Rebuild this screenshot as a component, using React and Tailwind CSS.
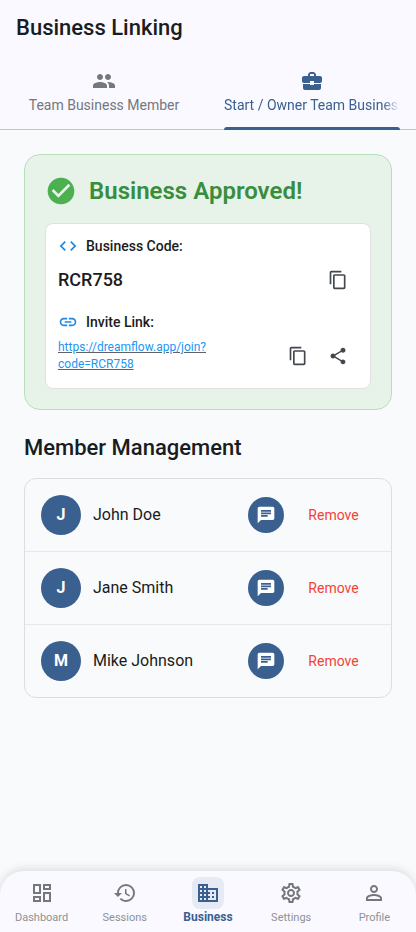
import {
  MdPeople, MdBusinessCenter, MdCheckCircle, MdCode, MdLink, MdContentCopy, MdShare,
  MdChat, MdOutlineDashboard, MdHistory, MdBusiness, MdOutlineSettings, MdPersonOutline,
} from "react-icons/md";

const members = ["John Doe", "Jane Smith", "Mike Johnson"];

const navItems = [
  { label: "Dashboard", Icon: MdOutlineDashboard },
  { label: "Sessions", Icon: MdHistory },
  { label: "Business", Icon: MdBusiness, active: true },
  { label: "Settings", Icon: MdOutlineSettings },
  { label: "Profile", Icon: MdPersonOutline },
];

function IconButton({ label, children }) {
  return (
    <button type="button" aria-label={label} className="flex size-10 shrink-0 items-center justify-center text-[#43474e]">
      {children}
    </button>
  );
}

function Tabs() {
  return (
    <div role="tablist" className="grid h-[74px] grid-cols-2 border-b border-[#c3c6cf]">
      <button type="button" role="tab" aria-selected="false" className="flex min-w-0 flex-col items-center px-4 pt-[13px] text-[#74777c]">
        <MdPeople size={24} />
        <span className="text-sm leading-6 whitespace-nowrap">Team Business Member</span>
      </button>
      <div className="-mb-px flex min-w-0 px-4">
        <button type="button" role="tab" aria-selected="true" className="flex w-full min-w-0 flex-col items-center pt-[13px] text-[#3a608f]">
          <MdBusinessCenter size={24} />
          <span className="w-full overflow-hidden text-left text-sm leading-6 whitespace-nowrap [mask-image:linear-gradient(to_right,black_90%,transparent)]">
            Start / Owner Team Business
          </span>
          <span className="mt-auto h-[3px] w-full rounded-t-[3px] bg-[#3a608f]" />
        </button>
      </div>
    </div>
  );
}

function ApprovedCard() {
  return (
    <section className="rounded-2xl border border-[#b7dfb9] bg-[#e7f2e8] p-5">
      <div className="flex items-center gap-3">
        <MdCheckCircle size={32} className="text-[#4caf50]" />
        <h2 className="text-2xl leading-8 font-semibold text-[#388e3c]">Business Approved!</h2>
      </div>
      <div className="mt-4 rounded-lg border border-[#e0e0e0] bg-white p-3">
        <div className="flex items-center gap-2">
          <MdCode size={20} className="text-[#1e88e5]" />
          <h3 className="text-sm leading-5 font-medium">Business Code:</h3>
        </div>
        <div className="mt-1 flex items-center">
          <p className="flex-1 text-lg font-medium">RCR758</p>
          <IconButton label="Copy business code"><MdContentCopy size={20} /></IconButton>
        </div>
        <div className="mt-3 flex items-center gap-2">
          <MdLink size={20} className="text-[#1e88e5]" />
          <h3 className="text-sm leading-5 font-medium">Invite Link:</h3>
        </div>
        <div className="mt-1 flex items-center">
          <a href="https://dreamflow.app/join?code=RCR758" className="min-w-0 flex-1 text-xs leading-[17px] text-[#2196f3] underline decoration-[#5f6368]">
            https://dreamflow.app/join?<wbr />code=RCR758
          </a>
          <IconButton label="Copy invite link"><MdContentCopy size={20} /></IconButton>
          <IconButton label="Share invite link"><MdShare size={20} /></IconButton>
        </div>
      </div>
    </section>
  );
}

function MemberList() {
  return (
    <ul className="mt-4 divide-y divide-[#e6e8ea] rounded-xl border border-[#dcdee0]">
      {members.map((name) => (
        <li key={name} className="flex items-center p-4">
          <span className="flex size-10 items-center justify-center rounded-full bg-[#3a608f] text-base font-bold text-white">{name[0]}</span>
          <span className="ml-3 flex-1 text-base">{name}</span>
          <button type="button" aria-label={`Message ${name}`} className="flex size-9 items-center justify-center rounded-full bg-[#3a608f] text-white">
            <MdChat size={20} />
          </button>
          <button type="button" className="ml-2 w-[83px] py-2 text-center text-sm text-[#f44336]">Remove</button>
        </li>
      ))}
    </ul>
  );
}

function BottomNav() {
  return (
    <nav className="sticky bottom-0 grid grid-cols-5 rounded-t-3xl bg-[#f9f9ff] py-1.5 shadow-[0_-2px_10px_rgba(0,0,0,0.12)]">
      {navItems.map(({ label, Icon, active }) => (
        <a key={label} href={`#${label.toLowerCase()}`} aria-current={active ? "page" : undefined}
          className={active ? "flex flex-col items-center text-[#3a608f]" : "flex flex-col items-center text-[#74777c]"}>
          <span className={active ? "flex size-8 items-center justify-center rounded-lg bg-[#e5eaf4]" : "flex size-8 items-center justify-center"}>
            <Icon size={24} />
          </span>
          <span className={active ? "text-xs leading-[17px] font-bold" : "text-[11px] leading-[17px] text-[#8f9196]"}>{label}</span>
        </a>
      ))}
    </nav>
  );
}

export default function App() {
  return (
    <div className="flex min-h-screen flex-col bg-[#f8fafc] font-['Roboto',sans-serif] text-[#191c20]">
      <header className="bg-[#f9f9ff]">
        <h1 className="px-4 py-3.5 text-[22px] leading-7 font-medium">Business Linking</h1>
        <Tabs />
      </header>
      <main className="flex-1 p-6">
        <ApprovedCard />
        <h2 className="mt-6 text-[22px] leading-7 font-medium">Member Management</h2>
        <MemberList />
      </main>
      <BottomNav />
    </div>
  );
}
